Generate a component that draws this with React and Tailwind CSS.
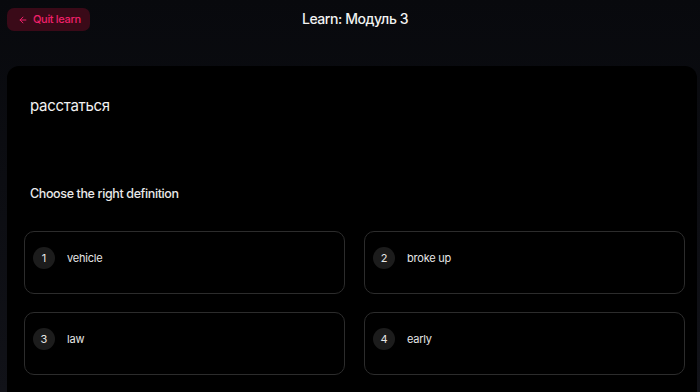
import { ArrowLeft } from "lucide-react";

const options = [
  { n: 1, label: "vehicle" },
  { n: 2, label: "broke up" },
  { n: 3, label: "law" },
  { n: 4, label: "early" },
];

export default function App() {
  return (
    <div
      className="h-[392px] w-[700px] overflow-hidden bg-gradient-to-b from-[#08090d] to-[#111218] text-white"
      style={{ fontFamily: "Inter, 'Noto Sans', sans-serif" }}
    >
      {/* Header */}
      <div className="relative flex h-[66px] items-start px-[7px] pt-[8px]">
        <button className="flex h-[23px] items-center gap-[5px] rounded-[7px] bg-[#3a0a18] pl-[11px] pr-[9px] text-[11px] font-medium tracking-[-0.03em] text-[#f0206a]">
          <ArrowLeft className="h-[10px] w-[10px]" strokeWidth={2.4} />
          Quit learn
        </button>
        <h1 className="absolute left-0 right-0 top-[9px] pl-[10px] text-center text-[14px] font-medium leading-[20px] tracking-[-0.03em] text-[#f2f2f2]">
          Learn: Модуль 3
        </h1>
      </div>

      {/* Card */}
      <div className="ml-[7px] mr-[3px] h-[340px] rounded-[12px] bg-black pl-[17px] pr-[12px] pt-[29px]">
        <p className="pl-[6px] text-[15px] leading-[22px] tracking-[-0.02em] text-[#f2f2f2]">расстаться</p>
        <p className="mt-[68px] pl-[6px] text-[12.5px] font-medium leading-[18px] tracking-[-0.03em] text-[#e8e8e8]">
          Choose the right definition
        </p>
        <div className="mt-[28px] grid grid-cols-2 gap-x-[19px] gap-y-[18px]">
          {options.map((o) => (
            <div
              key={o.n}
              className="flex h-[63px] items-start rounded-[10px] border border-[#2c2c2c] pl-[8px] pt-[15px]"
            >
              <span className="flex h-[22px] w-[22px] items-center justify-center rounded-full bg-[#1c1c1c] text-[11px] text-[#e6e6e6]">
                {o.n}
              </span>
              <span className="ml-[12px] text-[11px] leading-[22px] tracking-[-0.02em] text-[#e6e6e6]">{o.label}</span>
            </div>
          ))}
        </div>
      </div>
    </div>
  );
}
